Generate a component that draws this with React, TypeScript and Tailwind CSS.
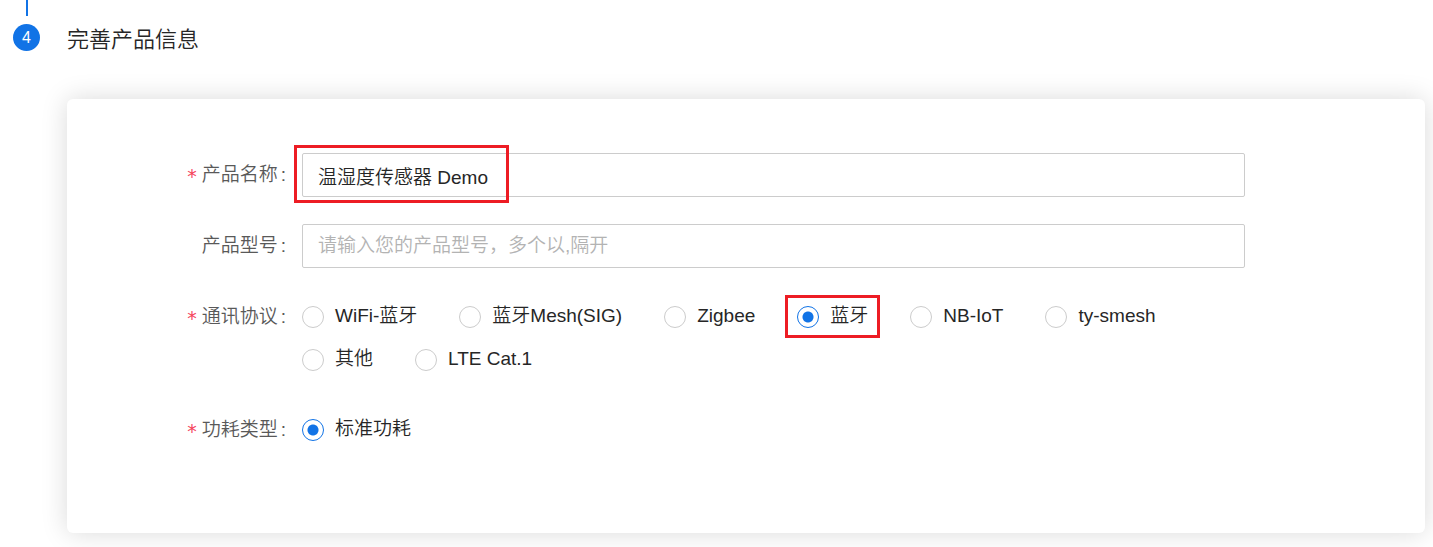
import React, { useState } from 'react';
import { clsx } from 'clsx';

const PROTOCOLS = ['WiFi-蓝牙', '蓝牙Mesh(SIG)', 'Zigbee', '蓝牙', 'NB-IoT', 'ty-smesh', '其他', 'LTE Cat.1'];
const HIGHLIGHTED_PROTOCOL = '蓝牙';

interface FormRowProps {
    label: string;
    required?: boolean;
    htmlFor?: string;
    id?: string;
    children: React.ReactNode;
}

const FormRow: React.FC<FormRowProps> = ({ label, required, htmlFor, id, children }) => {
    const Tag = htmlFor ? 'label' : 'span';
    return (
        <div className="flex items-start">
            <Tag
                id={id}
                {...(htmlFor ? { htmlFor } : {})}
                className="flex h-[43px] w-[235px] shrink-0 justify-end pr-4 leading-[43px] text-[#595959]"
            >
                {required && (
                    <span className="mr-[5px] pt-0.5 font-['DejaVu_Sans'] font-normal text-[#f5455c]">*</span>
                )}
                <span>{label}</span>
                <span className="ml-[3px]">:</span>
            </Tag>
            <div className="min-w-0 flex-1">{children}</div>
        </div>
    );
};

interface RadioOptionProps {
    name: string;
    value: string;
    checked: boolean;
    highlighted?: boolean;
    onChange: (value: string) => void;
}

const RadioOption: React.FC<RadioOptionProps> = ({ name, value, checked, highlighted, onChange }) => (
    <label className="relative flex h-[43px] cursor-pointer items-center text-[#262626]">
        <input
            type="radio"
            name={name}
            value={value}
            checked={checked}
            onChange={() => onChange(value)}
            className={clsx(
                'mr-[11px] size-[22px] cursor-pointer appearance-none rounded-full border bg-white',
                checked
                    ? 'border-[#1173e6] bg-[radial-gradient(circle,#1173e6_5px,transparent_6px)]'
                    : 'border-[#cccccc]'
            )}
        />
        {value}
        {highlighted && (
            <span className="pointer-events-none absolute -inset-x-3 inset-y-0 border-3 border-[#ed1c24]" />
        )}
    </label>
);

const inputClass =
    'block h-11 w-full rounded-xs border border-[#cccccc] bg-white px-[15px] text-[#262626] outline-none placeholder:text-[#b3b3b3] focus:border-[#1173e6]';

export default function App() {
    const [name, setName] = useState('温湿度传感器 Demo');
    const [model, setModel] = useState('');
    const [protocol, setProtocol] = useState('蓝牙');
    const [power, setPower] = useState('标准功耗');

    return (
        <main className="flex overflow-hidden bg-white pr-2 pb-[14px] pl-[13px] font-['Liberation_Sans','Noto_Sans_CJK_SC',sans-serif] text-[19px] font-[350]">
            {/* Step rail */}
            <div className="flex w-[27px] shrink-0 flex-col items-center">
                <div className="h-4 w-[2px] bg-[#1173e6]" />
                <div className="mt-2 flex size-[27px] items-center justify-center rounded-full bg-[#1173e6] text-base text-white">
                    4
                </div>
            </div>

            <section className="ml-[27px] min-w-0 flex-1 pt-[25px]">
                <h2 className="text-[22px] leading-[30px] font-[350] text-[#262626]">完善产品信息</h2>

                <form className="mt-11 flex flex-col gap-[27px] rounded-md bg-white pt-[54px] pr-[180px] pb-[82px] shadow-[0_0_27px_rgba(0,0,0,0.15)]">
                    <FormRow label="产品名称" htmlFor="product-name" required>
                        <div className="relative">
                            <input
                                id="product-name"
                                type="text"
                                value={name}
                                onChange={(e) => setName(e.target.value)}
                                className={inputClass}
                            />
                            <span className="pointer-events-none absolute -top-2 -left-2 h-[58px] w-[215px] border-3 border-[#ed1c24]" />
                        </div>
                    </FormRow>

                    <FormRow label="产品型号" htmlFor="product-model">
                        <input
                            id="product-model"
                            type="text"
                            value={model}
                            placeholder="请输入您的产品型号，多个以,隔开"
                            onChange={(e) => setModel(e.target.value)}
                            className={inputClass}
                        />
                    </FormRow>

                    <FormRow label="通讯协议" id="protocol-label" required>
                        <div role="radiogroup" aria-labelledby="protocol-label" className="flex flex-wrap gap-x-[42px]">
                            {PROTOCOLS.map((item) => (
                                <RadioOption
                                    key={item}
                                    name="protocol"
                                    value={item}
                                    checked={protocol === item}
                                    highlighted={item === HIGHLIGHTED_PROTOCOL}
                                    onChange={setProtocol}
                                />
                            ))}
                        </div>
                    </FormRow>

                    <FormRow label="功耗类型" id="power-label" required>
                        <div role="radiogroup" aria-labelledby="power-label" className="flex">
                            <RadioOption
                                name="power"
                                value="标准功耗"
                                checked={power === '标准功耗'}
                                onChange={setPower}
                            />
                        </div>
                    </FormRow>
                </form>
            </section>
        </main>
    );
}
